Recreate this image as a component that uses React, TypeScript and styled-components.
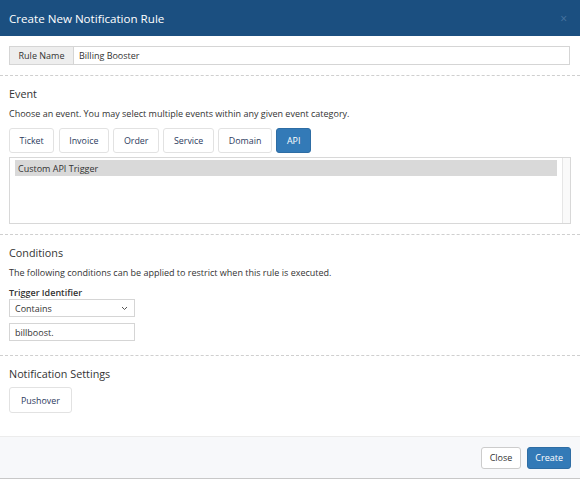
import React from 'react';
import styled, { createGlobalStyle } from 'styled-components';

const Global = createGlobalStyle`
  html, body { margin: 0; padding: 0; background: #fff; }
  body { font-family: "Open Sans", "Liberation Sans", sans-serif; color: #333; }
  * { box-sizing: border-box; }
`;

const Modal = styled.div`
  width: 580px;
  background: #fff;
  border-bottom: 1px solid #c8c8c8;
`;

const Header = styled.div`
  height: 36px;
  background: #1b4f80;
  display: flex;
  align-items: center;
  justify-content: space-between;
  padding: 0 9px;
`;

const Title = styled.div`
  color: #fff;
  font-size: 11.6px;
`;

const CloseX = styled.span`
  color: #4a76a0;
  font-size: 12px;
  margin-right: 4px;
`;

const Section = styled.div<{ $last?: boolean }>`
  padding: 10px 9px ${p => (p.$last ? '23px' : '10px')};
  border-bottom: ${p => (p.$last ? 'none' : '1px dashed #cfcfcf')};
`;

const InputGroup = styled.div`
  display: flex;
  height: 19px;
  margin-right: 1px;
  border: 1px solid #d5d5d5;
  font-size: 9px;
`;

const Addon = styled.div`
  width: 64px;
  background: #eee;
  border-right: 1px solid #d5d5d5;
  display: flex;
  align-items: center;
  justify-content: center;
  color: #333;
`;

const TextValue = styled.div`
  flex: 1;
  display: flex;
  align-items: center;
  padding: 0 5px;
`;

const Heading = styled.div`
  font-size: 10.8px;
  line-height: 16px;
  margin: 0 0 5px;
  color: #333;
`;

const Desc = styled.div`
  font-size: 9px;
  line-height: 14px;
  color: #333;
`;

const Tabs = styled.div`
  display: flex;
  gap: 4.5px;
  margin-top: 7px;
`;

const Tab = styled.div<{ $active?: boolean }>`
  height: 25px;
  padding: 0 9.5px;
  display: flex;
  align-items: center;
  font-size: 8.9px;
  border-radius: 3px;
  border: 1px solid ${p => (p.$active ? '#2e6da4' : '#e2e2e2')};
  background: ${p => (p.$active ? '#337ab7' : '#fff')};
  color: ${p => (p.$active ? '#fff' : '#2d3b5e')};
`;

const ListBox = styled.div`
  margin-top: 4px;
  height: 67px;
  border: 1px solid #d8d8d8;
  display: flex;
`;

const ListItems = styled.div`
  flex: 1;
  padding: 2px 5px 0 5px;
`;

const ListItem = styled.div`
  height: 16px;
  background: #d9d9d9;
  font-size: 9px;
  display: flex;
  align-items: center;
  padding-left: 3px;
  color: #333;
`;

const Scrollbar = styled.div`
  width: 8px;
  border-left: 1px solid #e6e6e6;
  background: #fafafa;
`;

const Label = styled.div`
  font-size: 9px;
  font-weight: 600;
  line-height: 12px;
  margin-top: 7px;
  color: #333;
`;

const Field = styled.div<{ $gapTop?: number }>`
  width: 126px;
  height: 18px;
  margin-top: ${p => p.$gapTop ?? 0}px;
  border: 1px solid #d5d5d5;
  display: flex;
  align-items: center;
  justify-content: space-between;
  padding: 0 6px 0 5px;
  font-size: 9px;
  color: #333;
`;

const FormGroup = styled.div`
  margin-bottom: 4px;
`;

const Chevron = () => (
  <svg width="7" height="5" viewBox="0 0 7 5">
    <path d="M1 1l2.5 2.5L6 1" fill="none" stroke="#555" strokeWidth="1" />
  </svg>
);

const Footer = styled.div`
  height: 42px;
  background: #f7f8fa;
  border-top: 1px solid #ececec;
  display: flex;
  justify-content: flex-end;
  align-items: center;
  gap: 6px;
  padding: 0 9px;
`;

const Button = styled.div<{ $primary?: boolean }>`
  height: 22px;
  padding: 0 ${p => (p.$primary ? 7 : 8)}px;
  display: flex;
  align-items: center;
  border-radius: 3px;
  font-size: 9px;
  border: 1px solid ${p => (p.$primary ? '#2e6da4' : '#ccc')};
  background: ${p => (p.$primary ? '#337ab7' : '#fff')};
  color: ${p => (p.$primary ? '#fff' : '#333')};
`;

const Pushover = styled(Tab)`
  height: 26px;
  padding: 0 11px;
  margin-top: 1px;
  width: fit-content;
`;

const events = ['Ticket', 'Invoice', 'Order', 'Service', 'Domain', 'API'];

export default function App() {
  return (
    <Modal>
      <Global />
      <Header>
        <Title>Create New Notification Rule</Title>
        <CloseX>×</CloseX>
      </Header>

      <Section>
        <InputGroup>
          <Addon>Rule Name</Addon>
          <TextValue>Billing Booster</TextValue>
        </InputGroup>
      </Section>

      <Section>
        <Heading>Event</Heading>
        <Desc>Choose an event. You may select multiple events within any given event category.</Desc>
        <Tabs>
          {events.map(e => (
            <Tab key={e} $active={e === 'API'}>{e}</Tab>
          ))}
        </Tabs>
        <ListBox>
          <ListItems>
            <ListItem>Custom API Trigger</ListItem>
          </ListItems>
          <Scrollbar />
        </ListBox>
      </Section>

      <Section>
        <Heading>Conditions</Heading>
        <Desc>The following conditions can be applied to restrict when this rule is executed.</Desc>
        <FormGroup>
          <Label>Trigger Identifier</Label>
          <Field>
            Contains
            <Chevron />
          </Field>
          <Field $gapTop={6}>billboost.</Field>
        </FormGroup>
      </Section>

      <Section $last>
        <Heading>Notification Settings</Heading>
        <Pushover>Pushover</Pushover>
      </Section>

      <Footer>
        <Button>Close</Button>
        <Button $primary>Create</Button>
      </Footer>
    </Modal>
  );
}
